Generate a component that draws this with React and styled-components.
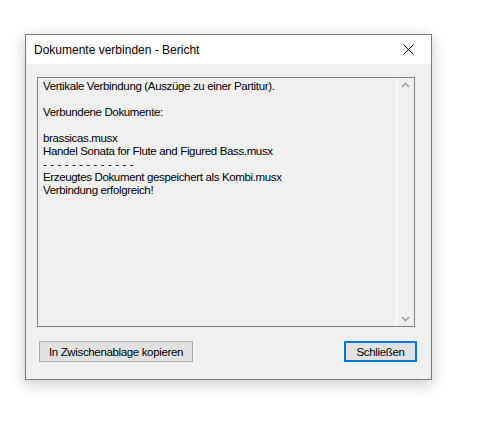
import React from 'react';
import styled, { createGlobalStyle } from 'styled-components';

const GlobalStyle = createGlobalStyle`
  html, body {
    margin: 0;
    padding: 0;
    background: #ffffff;
  }
  body {
    font-family: "Liberation Sans", Arial, sans-serif;
  }
`;

const Page = styled.div`
  padding: 34px 0 0 25px;
  width: 485px;
  height: 424px;
  box-sizing: border-box;
`;

const Dialog = styled.div`
  width: 407px;
  height: 346px;
  box-sizing: border-box;
  border: 1px solid #7a7a7a;
  background: #f0f0f0;
  box-shadow: 0 4px 14px rgba(0, 0, 0, 0.22);
  display: flex;
  flex-direction: column;
`;

const TitleBar = styled.div`
  height: 29px;
  background: #ffffff;
  display: flex;
  align-items: center;
  justify-content: space-between;
  padding-left: 8px;
`;

const Title = styled.span`
  font-size: 12px;
  color: #000;
`;

const CloseButton = styled.button`
  width: 46px;
  height: 29px;
  border: 0;
  background: transparent;
  display: flex;
  align-items: center;
  justify-content: center;
  padding: 0;
`;

const Body = styled.div`
  flex: 1;
  padding: 13px 16px 0 11px;
  display: flex;
  flex-direction: column;
`;

const ReportBox = styled.div`
  height: 250px;
  box-sizing: border-box;
  border: 1px solid #828282;
  display: flex;
`;

const ReportText = styled.div`
  flex: 1;
  padding: 2px 0 0 5px;
  font-size: 11.5px;
  letter-spacing: -0.35px;
  line-height: 13px;
  color: #000;
`;

const Line = styled.div`
  height: 13px;
  white-space: pre;
  word-spacing: ${(p) => (p.$spread ? '0.9px' : 'normal')};
`;

const Scrollbar = styled.div`
  width: 17px;
  border-left: 1px solid #ffffff;
  display: flex;
  flex-direction: column;
  justify-content: space-between;
  align-items: center;
  padding: 4px 0;
`;

const Footer = styled.div`
  display: flex;
  justify-content: space-between;
  margin-top: 14px;
  padding-left: 2px;
  margin-right: -2px;
`;

const Button = styled.button`
  height: 21px;
  width: ${(p) => p.$width}px;
  box-sizing: border-box;
  border: ${(p) => (p.$default ? '2px solid #0078d7' : '1px solid #adadad')};
  background: #e1e1e1;
  font-family: "Liberation Sans", Arial, sans-serif;
  font-size: 11.5px;
  letter-spacing: -0.35px;
  color: #000;
  padding: 0;
`;

const reportLines = [
  'Vertikale Verbindung (Auszüge zu einer Partitur).',
  '',
  'Verbundene Dokumente:',
  '',
  'brassicas.musx',
  'Handel Sonata for Flute and Figured Bass.musx',
  '- - - - - - - - - - - - -',
  'Erzeugtes Dokument gespeichert als Kombi.musx',
  'Verbindung erfolgreich!',
];

const Chevron = ({ up }) => (
  <svg width="9" height="6" viewBox="0 0 9 6">
    <path
      d={up ? 'M1 5 L4.5 1.5 L8 5' : 'M1 1 L4.5 4.5 L8 1'}
      fill="none"
      stroke="#a3a3a3"
      strokeWidth="1.6"
    />
  </svg>
);

const App = () => {
  return (
    <Page>
      <GlobalStyle />
      <Dialog>
        <TitleBar>
          <Title>Dokumente verbinden - Bericht</Title>
          <CloseButton aria-label="Schließen">
            <svg width="11" height="11" viewBox="0 0 11 11">
              <path d="M0.5 0.5 L10.5 10.5 M10.5 0.5 L0.5 10.5" stroke="#000" strokeWidth="1" />
            </svg>
          </CloseButton>
        </TitleBar>
        <Body>
          <ReportBox>
            <ReportText>
              {reportLines.map((line, i) => (
                <Line key={i} $spread={line.startsWith('- ')}>
                  {line}
                </Line>
              ))}
            </ReportText>
            <Scrollbar>
              <Chevron up />
              <Chevron />
            </Scrollbar>
          </ReportBox>
          <Footer>
            <Button $width={154}>In Zwischenablage kopieren</Button>
            <Button $width={73} $default>
              Schließen
            </Button>
          </Footer>
        </Body>
      </Dialog>
    </Page>
  );
};

export default App;
